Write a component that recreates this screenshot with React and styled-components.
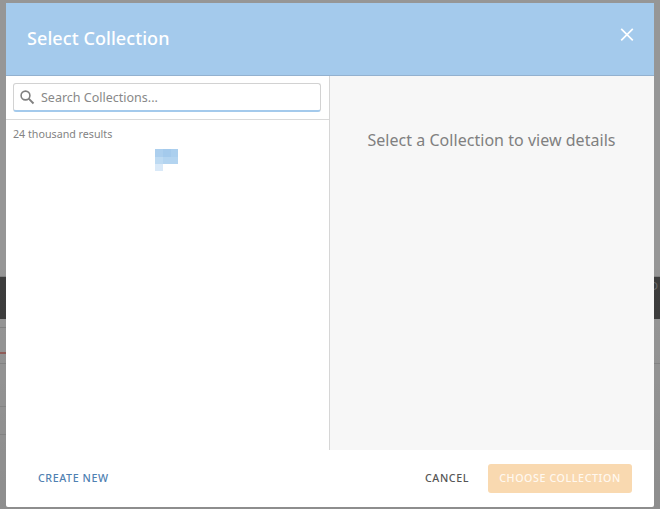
import React from "react";
import styled, { createGlobalStyle } from "styled-components";

const GlobalStyle = createGlobalStyle`
  *, *::before, *::after { box-sizing: border-box; }
  body { margin: 0; overflow: hidden; font-family: "Noto Sans", "Open Sans", sans-serif; }
`;

const Screen = styled.div`
  position: relative;
  width: 660px;
  height: 509px;
  overflow: hidden;
  background: #969696;
`;

const Backdrop = styled.div`
  display: grid;
  grid-template-columns: 330px 330px;
  height: 100%;
`;

const BackdropColumn = styled.div`
  display: flex;
  flex-direction: column;
`;

const Band = styled.div`
  flex: none;
  height: ${(p) => p.$height}px;
  background: ${(p) => p.$color || "transparent"};
`;

const DarkBar = styled.div`
  flex: none;
  display: flex;
  justify-content: flex-end;
  height: 42px;
  padding-right: 2px;
  background: #3d3d3d;
  color: #6c6c6c;
  font-size: 11px;
  line-height: 18px;
`;

const ModalLayer = styled.div`
  position: absolute;
  inset: 0;
  background: linear-gradient(rgba(0, 0, 0, 0) 50%, rgba(0, 0, 0, 0.06));
`;

const Modal = styled.section`
  position: absolute;
  inset: 3px 6px 2px;
  display: flex;
  flex-direction: column;
  overflow: hidden;
  border-radius: 0 0 2px 2px;
  background: #fff;
`;

const Header = styled.header`
  flex: none;
  display: flex;
  justify-content: space-between;
  height: 73px;
  padding: 21px 20px 0 21px;
  border-bottom: 1px solid #93b1cf;
  background: #a4caec;
  color: #fff;
`;

const Title = styled.h1`
  margin: 0;
  font-size: 18px;
  font-weight: 500;
  line-height: 28px;
  letter-spacing: 0.08px;
`;

const CloseButton = styled.button`
  width: 14px;
  height: 14px;
  margin-top: 4px;
  padding: 0;
  border: 0;
  background: none;
  color: inherit;
  svg { display: block; }
`;

const Body = styled.div`
  flex: none;
  display: flex;
  height: 374px;
`;

const ListPane = styled.div`
  width: 324px;
  border-right: 1px solid #d6d6d6;
`;

const SearchArea = styled.div`
  height: 44px;
  padding: 7px 8px 0 7px;
  border-bottom: 1px solid #dadada;
`;

const SearchField = styled.label`
  display: flex;
  align-items: center;
  gap: 6px;
  height: 29px;
  padding-left: 6px;
  border: 1px solid #d2d2d2;
  border-bottom: 2px solid #a4caec;
  border-radius: 3px;
  svg { flex: none; }
`;

const SearchInput = styled.input`
  flex: 1;
  min-width: 0;
  height: 24px;
  padding: 0;
  border: 0;
  outline: 0;
  background: none;
  font: 12.5px "Noto Sans", sans-serif;
  color: #666;
  &::placeholder { color: #888; opacity: 1; }
`;

const ResultCount = styled.p`
  height: 29px;
  margin: 0;
  padding: 6px 7px 0;
  font-size: 10.7px;
  line-height: 16px;
  color: #838383;
`;

const Loader = styled.div`
  display: grid;
  grid-template-columns: 8px 8px 7px;
  grid-template-rows: 8px 7px 7px;
  width: 23px;
  margin-left: 149px;
`;

const LoaderCell = styled.span`
  background: ${(p) => p.$color};
`;

const DetailPane = styled.div`
  flex: 1;
  padding-top: 52px;
  background: #f7f7f7;
  text-align: center;
`;

const EmptyMessage = styled.p`
  margin: 0;
  padding-right: 1px;
  font-size: 16px;
  line-height: 24px;
  letter-spacing: 0.03px;
  color: #808080;
`;

const Footer = styled.footer`
  flex: 1;
  display: flex;
  align-items: flex-start;
  padding: 14px 22px 0 32px;
`;

const TextButton = styled.button`
  height: 29px;
  padding: 0 0 1px;
  border: 0;
  background: none;
  color: ${(p) => p.$color};
  font: 500 10.7px/28px "Noto Sans", sans-serif;
  letter-spacing: 0.58px;
  white-space: nowrap;
`;

const Actions = styled.div`
  display: flex;
  gap: 19px;
  margin-left: auto;
`;

const PrimaryButton = styled(TextButton)`
  width: 144px;
  border-radius: 3px;
  background: #f9d9b0;
`;

const loaderColors = ["#accfee", "#a4caec", "#abcfee", "#bddaf2", "#b3d4f0", "#b3d4f0", "#d9e9f8"];

export default function App() {
  return (
    <Screen>
      <GlobalStyle />
      <Backdrop>
        <BackdropColumn>
          <Band $height={276} />
          <Band $height={1} $color="#818181" />
          <DarkBar />
          <Band $height={8} />
          <Band $height={1} $color="#838383" />
          <Band $height={24} />
          <Band $height={2} $color="#935f5b" />
          <Band $height={9} />
          <Band $height={1} $color="#858585" />
          <Band $height={42} />
          <Band $height={1} $color="#888" />
          <Band $height={27} />
          <Band $height={1} $color="#888" />
        </BackdropColumn>
        <BackdropColumn>
          <Band $height={276} />
          <Band $height={1} $color="#818181" />
          <DarkBar>D</DarkBar>
          <Band $height={44} />
          <Band $height={1} $color="#858585" />
        </BackdropColumn>
      </Backdrop>
      <ModalLayer>
        <Modal>
          <Header>
            <Title>Select Collection</Title>
            <CloseButton aria-label="Close">
              <svg width="14" height="14" viewBox="0 0 14 14">
                <path d="M1.2 .8 12.8 12.4M12.8 .8 1.2 12.4" fill="none" stroke="currentColor" strokeWidth="1.7" />
              </svg>
            </CloseButton>
          </Header>
          <Body>
            <ListPane>
              <SearchArea>
                <SearchField>
                  <svg width="15" height="15" viewBox="0 0 15 15" fill="none" stroke="#808080">
                    <circle cx="5.5" cy="5.5" r="4.4" strokeWidth="1.6" />
                    <path d="m8.7 8.7 4.8 4.8" strokeWidth="1.9" />
                  </svg>
                  <SearchInput placeholder="Search Collections..." />
                </SearchField>
              </SearchArea>
              <ResultCount>24 thousand results</ResultCount>
              <Loader>
                {loaderColors.map((color, i) => (
                  <LoaderCell key={i} $color={color} />
                ))}
              </Loader>
            </ListPane>
            <DetailPane>
              <EmptyMessage>Select a Collection to view details</EmptyMessage>
            </DetailPane>
          </Body>
          <Footer>
            <TextButton $color="#4f81b2">CREATE NEW</TextButton>
            <Actions>
              <TextButton $color="#555">CANCEL</TextButton>
              <PrimaryButton $color="#fff8ef">CHOOSE COLLECTION</PrimaryButton>
            </Actions>
          </Footer>
        </Modal>
      </ModalLayer>
    </Screen>
  );
}
